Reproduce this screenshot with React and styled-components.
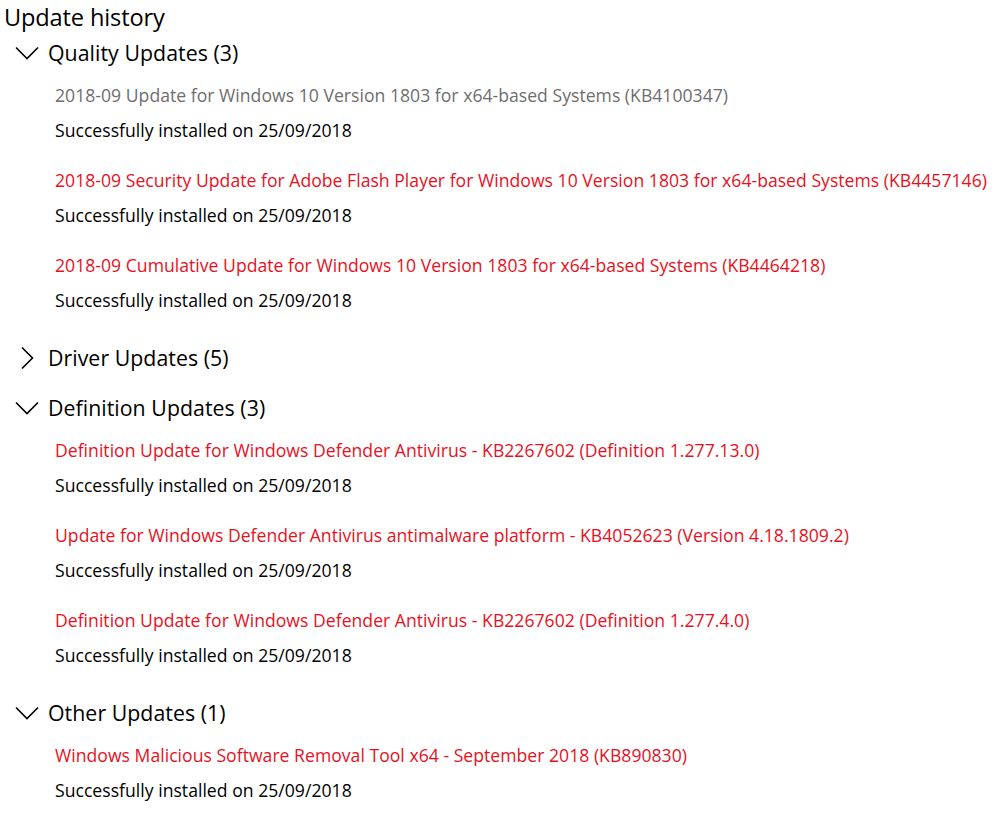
import React from "react";
import styled, { createGlobalStyle } from "styled-components";

const GlobalStyle = createGlobalStyle`
  html, body { margin: 0; padding: 0; background: #ffffff; }
  body { font-family: "Open Sans", "Noto Sans", sans-serif; color: #000; }
`;

const Page = styled.div`
  padding: 0 0 0 4px;
  display: flex;
  flex-direction: column;
`;

const Title = styled.h1`
  margin: 0;
  font-size: 23.6px;
  font-weight: 400;
  line-height: 34px;
  letter-spacing: -0.15px;
`;

const Section = styled.section`
  display: flex;
  flex-direction: column;
  margin-bottom: ${(p) => (p.$open ? "0" : "12px")};
`;

const SectionHeader = styled.div`
  box-sizing: border-box;
  display: flex;
  align-items: center;
  height: 38px;
  padding: 0 0 1px 11px;
  gap: 9px;
  font-size: 21.3px;
  letter-spacing: 0.05px;
`;

const ChevronBox = styled.span`
  width: 24px;
  height: 24px;
  display: flex;
  align-items: center;
  justify-content: center;
`;

const ItemList = styled.div`
  display: flex;
  flex-direction: column;
  padding-left: 51px;
  padding-top: 11px;
  padding-bottom: 27px;
  gap: 26px;
`;

const Item = styled.div`
  display: flex;
  flex-direction: column;
  gap: 11px;
`;

const ItemTitle = styled.div`
  font-size: 17.6px;
  line-height: 24px;
  letter-spacing: 0.02px;
  color: ${(p) => (p.$muted ? "#6e6e6e" : "#e81123")};
  white-space: nowrap;
`;

const Status = styled.div`
  font-size: 17.6px;
  line-height: 24px;
  letter-spacing: 0.02px;
  color: #000;
`;

const Chevron = ({ open }) =>
  open ? (
    <svg width="24" height="14" viewBox="0 0 24 14">
      <path d="M1 1.5 L12 12.5 L23 1.5" fill="none" stroke="#000" strokeWidth="1.6" />
    </svg>
  ) : (
    <svg width="14" height="24" viewBox="0 0 14 24">
      <path d="M2 1.5 L12.5 12 L2 22.5" fill="none" stroke="#000" strokeWidth="1.6" />
    </svg>
  );

const installed = "Successfully installed on 25/09/2018";

const sections = [
  {
    name: "Quality Updates (3)",
    open: true,
    items: [
      { title: "2018-09 Update for Windows 10 Version 1803 for x64-based Systems (KB4100347)", muted: true },
      { title: "2018-09 Security Update for Adobe Flash Player for Windows 10 Version 1803 for x64-based Systems (KB4457146)" },
      { title: "2018-09 Cumulative Update for Windows 10 Version 1803 for x64-based Systems (KB4464218)" },
    ],
  },
  { name: "Driver Updates (5)", open: false, items: [] },
  {
    name: "Definition Updates (3)",
    open: true,
    items: [
      { title: "Definition Update for Windows Defender Antivirus - KB2267602 (Definition 1.277.13.0)" },
      { title: "Update for Windows Defender Antivirus antimalware platform - KB4052623 (Version 4.18.1809.2)" },
      { title: "Definition Update for Windows Defender Antivirus - KB2267602 (Definition 1.277.4.0)" },
    ],
  },
  {
    name: "Other Updates (1)",
    open: true,
    items: [{ title: "Windows Malicious Software Removal Tool x64 - September 2018 (KB890830)" }],
  },
];

export default function App() {
  return (
    <>
      <GlobalStyle />
      <Page>
        <Title>Update history</Title>
        {sections.map((s) => (
          <Section key={s.name} $open={s.open}>
            <SectionHeader>
              <ChevronBox>
                <Chevron open={s.open} />
              </ChevronBox>
              {s.name}
            </SectionHeader>
            {s.open && (
              <ItemList>
                {s.items.map((it) => (
                  <Item key={it.title}>
                    <ItemTitle $muted={it.muted}>{it.title}</ItemTitle>
                    <Status>{installed}</Status>
                  </Item>
                ))}
              </ItemList>
            )}
          </Section>
        ))}
      </Page>
    </>
  );
}
